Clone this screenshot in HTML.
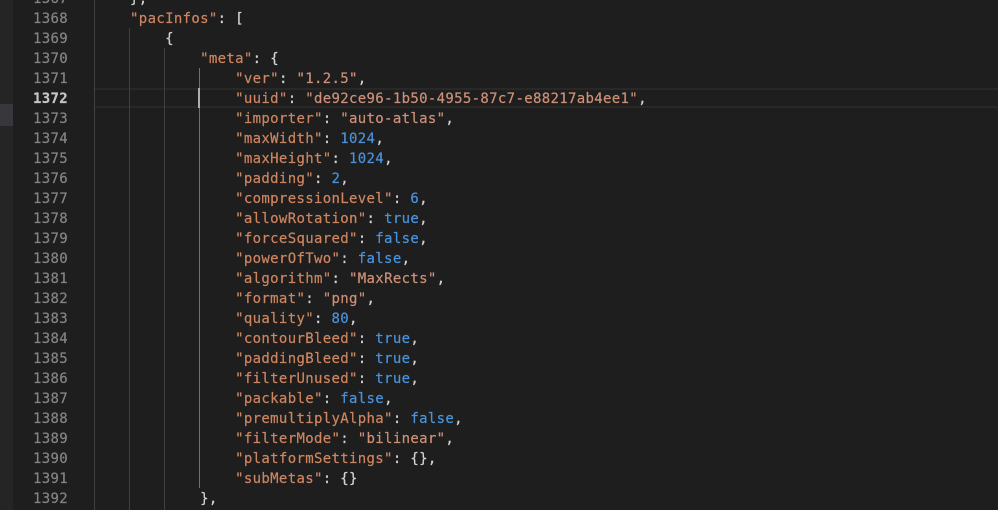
<!DOCTYPE html>
<html><head><meta charset="utf-8"><style>
html,body{margin:0;padding:0;background:#1e1e1e;width:998px;height:510px;overflow:hidden}
#w{position:relative;width:998px;height:510px;overflow:hidden;font-family:"DejaVu Sans Mono","Liberation Mono",monospace;font-size:14px;letter-spacing:.33px;line-height:20px;color:#d4d4d4;-webkit-text-stroke:.2px}
.a{position:absolute}
.l{position:absolute;left:95px;white-space:pre;height:20px;margin-top:1px}
.n{position:absolute;left:20px;width:48px;text-align:right;color:#858585;height:20px;margin-top:1px}
i{font-style:normal}
.s{color:#ce9178}.k{color:#ce8560}.v{color:#4a93dc}.c{color:#d4d4d4}
.g{position:absolute;width:1px;background:#404040}
</style></head><body><div id="w">
<div class="a" style="left:0;top:0;width:13px;height:510px;background:#252526"></div>
<div class="a" style="left:0;top:104px;width:13px;height:22px;background:#37373d"></div>
<div class="a" style="left:95px;top:88px;width:903px;height:20px;box-sizing:border-box;border-top:2px solid #282828;border-bottom:2px solid #282828"></div>
<div class="g" style="left:94px;top:0;height:510px"></div>
<div class="g" style="left:129px;top:28px;height:482px"></div>
<div class="g" style="left:164px;top:48px;height:462px"></div>
<div class="g" style="left:199px;top:68px;height:420px;background:#707070"></div>
<div class="a" style="left:198px;top:88px;width:2px;height:20px;background:#aeafad"></div>
<div class="n" style="top:-12px">1367</div><div class="l" style="top:-12px">    },</div>
<div class="n" style="top:8px">1368</div><div class="l" style="top:8px">    <i class="k">"pacInfos"</i>: [</div>
<div class="n" style="top:28px">1369</div><div class="l" style="top:28px">        {</div>
<div class="n" style="top:48px">1370</div><div class="l" style="top:48px">            <i class="k">"meta"</i>: {</div>
<div class="n" style="top:68px">1371</div><div class="l" style="top:68px">                <i class="k">"ver"</i>: <i class="s">"1.2.5"</i>,</div>
<div class="n" style="top:88px;color:#c6c6c6;font-weight:bold">1372</div><div class="l" style="top:88px">                <i class="k">"uuid"</i>: <i class="s">"de92ce96-1b50-4955-87c7-e88217ab4ee1"</i>,</div>
<div class="n" style="top:108px">1373</div><div class="l" style="top:108px">                <i class="k">"importer"</i>: <i class="s">"auto-atlas"</i>,</div>
<div class="n" style="top:128px">1374</div><div class="l" style="top:128px">                <i class="k">"maxWidth"</i>: <i class="v">1024</i>,</div>
<div class="n" style="top:148px">1375</div><div class="l" style="top:148px">                <i class="k">"maxHeight"</i>: <i class="v">1024</i>,</div>
<div class="n" style="top:168px">1376</div><div class="l" style="top:168px">                <i class="k">"padding"</i>: <i class="v">2</i>,</div>
<div class="n" style="top:188px">1377</div><div class="l" style="top:188px">                <i class="k">"compressionLevel"</i>: <i class="v">6</i>,</div>
<div class="n" style="top:208px">1378</div><div class="l" style="top:208px">                <i class="k">"allowRotation"</i>: <i class="v">true</i>,</div>
<div class="n" style="top:228px">1379</div><div class="l" style="top:228px">                <i class="k">"forceSquared"</i>: <i class="v">false</i>,</div>
<div class="n" style="top:248px">1380</div><div class="l" style="top:248px">                <i class="k">"powerOfTwo"</i>: <i class="v">false</i>,</div>
<div class="n" style="top:268px">1381</div><div class="l" style="top:268px">                <i class="k">"algorithm"</i>: <i class="s">"MaxRects"</i>,</div>
<div class="n" style="top:288px">1382</div><div class="l" style="top:288px">                <i class="k">"format"</i>: <i class="s">"png"</i>,</div>
<div class="n" style="top:308px">1383</div><div class="l" style="top:308px">                <i class="k">"quality"</i>: <i class="v">80</i>,</div>
<div class="n" style="top:328px">1384</div><div class="l" style="top:328px">                <i class="k">"contourBleed"</i>: <i class="v">true</i>,</div>
<div class="n" style="top:348px">1385</div><div class="l" style="top:348px">                <i class="k">"paddingBleed"</i>: <i class="v">true</i>,</div>
<div class="n" style="top:368px">1386</div><div class="l" style="top:368px">                <i class="k">"filterUnused"</i>: <i class="v">true</i>,</div>
<div class="n" style="top:388px">1387</div><div class="l" style="top:388px">                <i class="k">"packable"</i>: <i class="v">false</i>,</div>
<div class="n" style="top:408px">1388</div><div class="l" style="top:408px">                <i class="k">"premultiplyAlpha"</i>: <i class="v">false</i>,</div>
<div class="n" style="top:428px">1389</div><div class="l" style="top:428px">                <i class="k">"filterMode"</i>: <i class="s">"bilinear"</i>,</div>
<div class="n" style="top:448px">1390</div><div class="l" style="top:448px">                <i class="k">"platformSettings"</i>: {},</div>
<div class="n" style="top:468px">1391</div><div class="l" style="top:468px">                <i class="k">"subMetas"</i>: {}</div>
<div class="n" style="top:488px">1392</div><div class="l" style="top:488px">            },</div>
</div></body></html>
